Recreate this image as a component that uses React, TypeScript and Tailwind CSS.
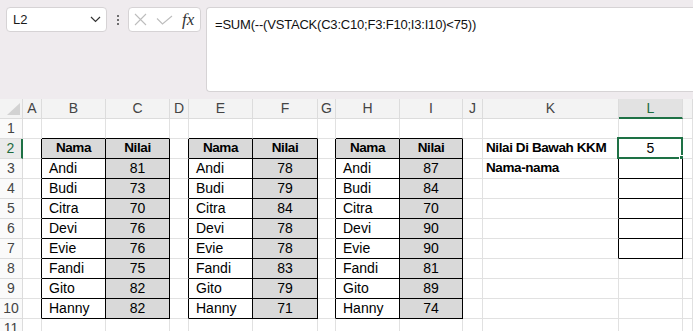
import React from "react";

const COLS = ["", "A", "B", "C", "D", "E", "F", "G", "H", "I", "J", "K", "L", ""];
const NAMES = ["Andi", "Budi", "Citra", "Devi", "Evie", "Fandi", "Gito", "Hanny"];
const VALUES: Record<number, number[]> = {
  3: [81, 73, 70, 76, 76, 75, 82, 82],
  6: [78, 79, 84, 78, 78, 83, 79, 71],
  9: [87, 84, 70, 90, 90, 81, 89, 74],
};
const ROWS = [1, 2, 3, 4, 5, 6, 7, 8, 9, 10, 11];

// cells that belong to a bordered table
function isBox(c: number, r: number) {
  if (r >= 2 && r <= 10 && [2, 3, 5, 6, 8, 9].includes(c)) return true;
  if (c === 12 && r >= 2 && r <= 7) return true;
  return false;
}

type Cell = { text?: string; bold?: boolean; align?: "left" | "center"; indent?: boolean; fill?: boolean };

function cellAt(c: number, r: number): Cell {
  if (r === 2) {
    if (c === 2 || c === 5 || c === 8) return { text: "Nama", bold: true, align: "center", fill: true };
    if (c === 3 || c === 6 || c === 9) return { text: "Nilai", bold: true, align: "center", fill: true };
    if (c === 11) return { text: "Nilai Di Bawah KKM", bold: true };
    if (c === 12) return { text: "5", align: "center" };
  }
  if (r >= 3 && r <= 10) {
    if (c === 2 || c === 5 || c === 8) return { text: NAMES[r - 3], indent: true };
    if (VALUES[c]) return { text: String(VALUES[c][r - 3]), align: "center", fill: true };
  }
  if (r === 3 && c === 11) return { text: "Nama-nama", bold: true };
  return {};
}

function Toolbar() {
  return (
    <div className="h-[99px] bg-[#efebee] flex items-start pt-[7px] pl-[6px]">
      <div className="w-[101px] h-[25px] bg-white border border-[#d6d3d5] rounded-[4px] flex items-center pl-[6px] pr-[5px] shrink-0">
        <span className="text-[13px] text-[#1a1a1a] flex-1">L2</span>
        <svg width="11" height="7" viewBox="0 0 11 7" fill="none">
          <path d="M1 1l4.5 4.5L10 1" stroke="#333" strokeWidth="1.2" />
        </svg>
      </div>
      <div className="w-[21px] h-[25px] flex flex-col items-center justify-center gap-[2px] shrink-0">
        <span className="w-[2px] h-[2px] bg-[#444] rounded-full" />
        <span className="w-[2px] h-[2px] bg-[#444] rounded-full" />
        <span className="w-[2px] h-[2px] bg-[#444] rounded-full" />
      </div>
      <div className="w-[73px] h-[25px] bg-white border border-[#d6d3d5] rounded-[4px] flex items-center pl-[5px] shrink-0">
        <svg width="13" height="13" viewBox="0 0 13 13" fill="none" className="mr-[9px]">
          <path d="M1 1l11 11M12 1L1 12" stroke="#bdbdbd" strokeWidth="1.1" />
        </svg>
        <svg width="17" height="10" viewBox="0 0 17 10" fill="none" className="mr-[9px]">
          <path d="M1 3.5l5.5 5.5L16 1" stroke="#bdbdbd" strokeWidth="1.1" />
        </svg>
        <span className="text-[17px] italic text-[#333] leading-none" style={{ fontFamily: '"Liberation Serif", "DejaVu Serif", serif' }}>
          fx
        </span>
      </div>
      <div className="flex-1 h-[85px] ml-[5px] bg-white border border-r-0 border-[#d6d3d5] rounded-l-[4px] pl-[8px] pt-[4px]">
        <span className="text-[13px] tracking-[-0.2px] text-[#111]">=SUM(--(VSTACK(C3:C10;F3:F10;I3:I10)&lt;75))</span>
      </div>
    </div>
  );
}

function HeaderRow() {
  return (
    <>
      <div className="bg-[#f3f3f3] border-r border-b border-[#dcdcdc] relative">
        <svg width="14" height="13" viewBox="0 0 14 13" className="absolute left-[7px] top-[4px]">
          <path d="M13 0V12H0Z" fill="#d2d2d2" />
        </svg>
      </div>
      {COLS.slice(1).map((l, i) =>
        i + 1 === 12 ? (
          <div key={i} className="bg-[#e2e2e2] border-r border-[#dcdcdc] border-b-2 border-b-[#1e7145] flex items-center justify-center text-[14px] text-[#1e6b40]">
            {l}
          </div>
        ) : (
          <div key={i} className="bg-[#f3f3f3] border-r border-b border-[#dcdcdc] flex items-center justify-center text-[14px] text-[#444]">
            {l}
          </div>
        )
      )}
    </>
  );
}

function GridRow({ r }: { r: number }) {
  return (
    <>
      {r === 2 ? (
        <div className="bg-[#eaeaea] border-r-2 border-r-[#1e7145] border-b border-b-[#dcdcdc] flex items-center justify-center text-[14px] text-[#1e6b40]">
          {r}
        </div>
      ) : (
        <div className="bg-[#fafafa] border-r border-b border-[#dcdcdc] flex items-center justify-center text-[14px] text-[#444]">
          {r}
        </div>
      )}
      {COLS.slice(1).map((_, i) => {
        const c = i + 1;
        const cell = cellAt(c, r);
        const right = isBox(c, r) || isBox(c + 1, r) ? "border-r-black" : "border-r-[#e1e1e1]";
        const bottom = isBox(c, r) || isBox(c, r + 1) ? "border-b-black" : "border-b-[#e1e1e1]";
        const bg = cell.fill ? "bg-[#d9d9d9]" : "bg-white";
        const align = cell.align === "center" ? "justify-center" : cell.indent ? "justify-start pl-[7px]" : "justify-start pl-[3px]";
        const weight = cell.bold ? "font-bold text-[13.5px] tracking-[-0.4px]" : "text-[14px]";
        return (
          <div
            key={c}
            className={`relative border-r border-b ${right} ${bottom} ${bg} flex items-center ${align} ${weight} text-black whitespace-nowrap`}
          >
            {cell.text}
            {c === 12 && r === 2 ? (
              <>
                <div className="absolute -left-[2px] -top-[2px] -right-[1px] -bottom-[1px] border-2 border-[#1e7145] pointer-events-none" />
                <div className="absolute -right-[4px] -bottom-[4px] w-[7px] h-[7px] bg-[#1e7145] border border-white" />
              </>
            ) : null}
          </div>
        );
      })}
    </>
  );
}

export default function App() {
  return (
    <div
      className="w-[693px] h-[331px] overflow-hidden bg-white"
      style={{ fontFamily: '"Liberation Sans", Arial, sans-serif' }}
    >
      <Toolbar />
      <div className="grid grid-cols-[23px_19px_64px_64px_19px_64px_65px_18px_64px_63px_20px_136px_64px_1fr] auto-rows-[20px]">
        <HeaderRow />
        {ROWS.map((r) => (
          <GridRow key={r} r={r} />
        ))}
      </div>
    </div>
  );
}
